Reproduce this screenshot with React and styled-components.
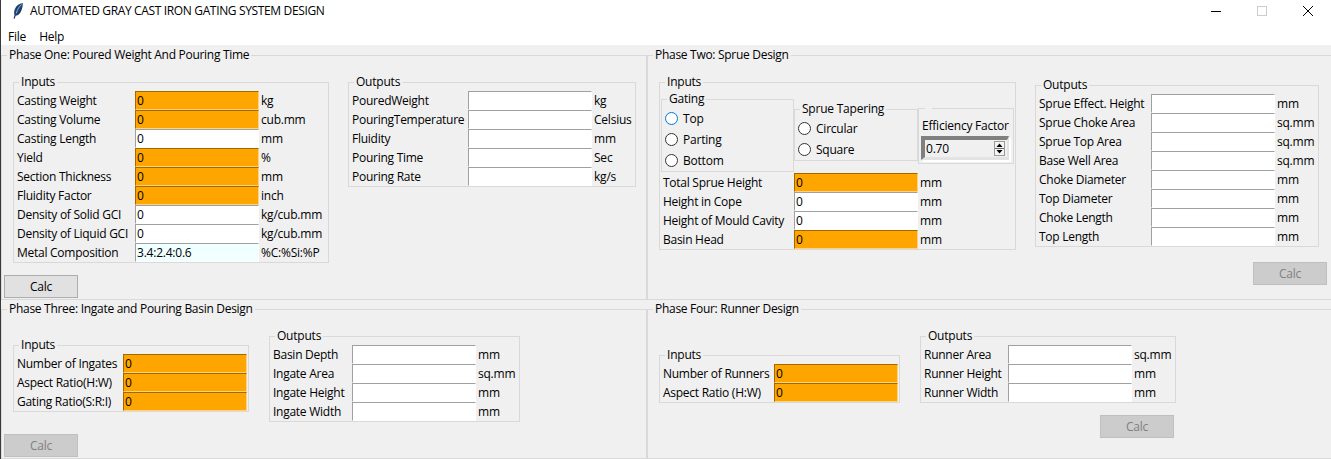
import React from 'react'
import styled, { createGlobalStyle } from 'styled-components'

const inputsOne = [
  ['Casting Weight', 'kg', 'req', '0'],
  ['Casting Volume', 'cub.mm', 'req', '0'],
  ['Casting Length', 'mm', 'opt', '0'],
  ['Yield', '%', 'req', '0'],
  ['Section Thickness', 'mm', 'req', '0'],
  ['Fluidity Factor', 'inch', 'req', '0'],
  ['Density of Solid GCI', 'kg/cub.mm', 'opt', '0'],
  ['Density of Liquid GCI', 'kg/cub.mm', 'opt', '0'],
  ['Metal Composition', '%C:%Si:%P', 'fixed', '3.4:2.4:0.6'],
]
const outputsOne = [
  ['PouredWeight', 'kg'],
  ['PouringTemperature', 'Celsius'],
  ['Fluidity', 'mm'],
  ['Pouring Time', 'Sec'],
  ['Pouring Rate', 'kg/s'],
]
const inputsTwo = [
  ['Total Sprue Height', 'mm', 'req', '0'],
  ['Height in Cope', 'mm', 'opt', '0'],
  ['Height of Mould Cavity', 'mm', 'opt', '0'],
  ['Basin Head', 'mm', 'req', '0'],
]
const outputsTwo = [
  ['Sprue Effect. Height', 'mm'],
  ['Sprue Choke Area', 'sq.mm'],
  ['Sprue Top Area', 'sq.mm'],
  ['Base Well Area', 'sq.mm'],
  ['Choke Diameter', 'mm'],
  ['Top Diameter', 'mm'],
  ['Choke Length', 'mm'],
  ['Top Length', 'mm'],
]
const inputsThree = [
  ['Number of Ingates', '', 'req', '0'],
  ['Aspect Ratio(H:W)', '', 'req', '0'],
  ['Gating Ratio(S:R:I)', '', 'req', '0'],
]
const outputsThree = [
  ['Basin Depth', 'mm'],
  ['Ingate Area', 'sq.mm'],
  ['Ingate Height', 'mm'],
  ['Ingate Width', 'mm'],
]
const inputsFour = [
  ['Number of Runners', '', 'req', '0'],
  ['Aspect Ratio (H:W)', '', 'req', '0'],
]
const outputsFour = [
  ['Runner Area', 'sq.mm'],
  ['Runner Height', 'mm'],
  ['Runner Width', 'mm'],
]

function Fields({ rows, label, unit }) {
  return (
    <Grid $label={label} $unit={unit}>
      {rows.map(([name, suffix, kind, value]) => (
        <React.Fragment key={name}>
          <FieldLabel>{name}</FieldLabel>
          <Entry $kind={kind} value={value || ''} readOnly />
          <Unit>{suffix}</Unit>
        </React.Fragment>
      ))}
    </Grid>
  )
}

function Radio({ name, text, active }) {
  return (
    <RadioRow>
      <RadioDot type='radio' name={name} $active={active} />
      {text}
    </RadioRow>
  )
}

export default function App() {
  return (
    <>
      <Global />
      <Window>
        <TitleBar>
          <Title>
            <svg width='12' height='18' viewBox='0 0 12 18'>
              <path d='M10.8 1 C7.2 1.4 4 3.8 2.8 7.2 C2 9.2 1.9 11.4 2.5 13 L1.6 16.6 L2.5 16.9 L3.7 13.8 C6.4 13.4 8.2 11.4 9.2 9 C10.4 6.4 10.8 3.6 10.8 1 Z' fill='#1f3f6b' />
              <path d='M9.6 2.6 C7.4 4.2 5.6 7 4.2 11.4' fill='none' stroke='#8fb4dc' strokeWidth='1' />
            </svg>
            <span>AUTOMATED GRAY CAST IRON GATING SYSTEM DESIGN</span>
          </Title>
          <Controls>
            <ControlBox>
              <svg width='10' height='10' viewBox='0 0 10 10'>
                <path d='M0 5.5H10' stroke='#000' />
              </svg>
            </ControlBox>
            <ControlBox>
              <svg width='10' height='10' viewBox='0 0 10 10'>
                <rect x='.5' y='.5' width='9' height='9' fill='none' stroke='#ccc' />
              </svg>
            </ControlBox>
            <ControlBox>
              <svg width='10' height='10' viewBox='0 0 10 10'>
                <path d='M0 0L10 10M10 0L0 10' stroke='#000' />
              </svg>
            </ControlBox>
          </Controls>
        </TitleBar>
        <MenuBar>
          <span>File</span>
          <span>Help</span>
        </MenuBar>
        <Main>
          <Panel $top={2}>
            <PanelTitle>Phase One: Poured Weight And Pouring Time</PanelTitle>
            <Body>
              <Groups $gap={19}>
                <Group>
                  <GroupTitle>Inputs</GroupTitle>
                  <Fields rows={inputsOne} label={121} unit={69} />
                </Group>
                <Group>
                  <GroupTitle>Outputs</GroupTitle>
                  <Fields rows={outputsOne} label={119} unit={43} />
                </Group>
              </Groups>
              <Calc $offset={2}>Calc</Calc>
            </Body>
          </Panel>
          <Panel $top={2} $open>
            <PanelTitle>Phase Two: Sprue Design</PanelTitle>
            <Body>
              <Groups $gap={19}>
                <Group>
                  <GroupTitle>Inputs</GroupTitle>
                  <Options>
                    <OptionGroup $width={133} $left={1}>
                      <GroupTitle>Gating</GroupTitle>
                      <Radio name='gating' text='Top' active />
                      <Radio name='gating' text='Parting' />
                      <Radio name='gating' text='Bottom' />
                    </OptionGroup>
                    <OptionGroup $width={124} $top={10}>
                      <GroupTitle>Sprue Tapering</GroupTitle>
                      <Radio name='taper' text='Circular' />
                      <Radio name='taper' text='Square' />
                    </OptionGroup>
                    <OptionGroup $width={96} $top={17}>
                      <BlankTitle />
                      <EffLabel>Efficiency Factor</EffLabel>
                      <Spinbox>
                        <SpinValue value='0.70' readOnly />
                        <svg width='11' height='15' viewBox='0 0 11 15'>
                          <rect x='.5' y='.5' width='10' height='14' fill='#f4f4f4' stroke='#9a9a9a' />
                          <path d='M1 7.5H10' stroke='#6a6a6a' />
                          <path d='M5.5 2.5L8.5 6H2.5ZM5.5 12.5L2.5 9H8.5Z' fill='#000' />
                        </svg>
                      </Spinbox>
                    </OptionGroup>
                  </Options>
                  <Fields rows={inputsTwo} label={134} unit={97} />
                </Group>
                <Group $top={3}>
                  <GroupTitle>Outputs</GroupTitle>
                  <Fields rows={outputsTwo} label={115} unit={43} />
                </Group>
              </Groups>
              <Calc $offset={605} disabled>Calc</Calc>
            </Body>
          </Panel>
          <Panel $top={1}>
            <PanelTitle>Phase Three: Ingate and Pouring Basin Design</PanelTitle>
            <Body>
              <Groups $gap={20}>
                <Group $top={9}>
                  <GroupTitle>Inputs</GroupTitle>
                  <Fields rows={inputsThree} label={109} unit={1} />
                </Group>
                <Group>
                  <GroupTitle>Outputs</GroupTitle>
                  <Fields rows={outputsThree} label={82} unit={43} />
                </Group>
              </Groups>
              <Calc $offset={2} disabled>Calc</Calc>
            </Body>
          </Panel>
          <Panel $top={1} $open>
            <PanelTitle>Phase Four: Runner Design</PanelTitle>
            <Body>
              <Groups $gap={20}>
                <Group $top={19}>
                  <GroupTitle>Inputs</GroupTitle>
                  <Fields rows={inputsFour} label={114} unit={1} />
                </Group>
                <Group>
                  <GroupTitle>Outputs</GroupTitle>
                  <Fields rows={outputsFour} label={87} unit={43} />
                </Group>
              </Groups>
              <Calc $offset={452} disabled>Calc</Calc>
            </Body>
          </Panel>
        </Main>
      </Window>
    </>
  )
}

const font = `"Open Sans", "Noto Sans", sans-serif`
const frameLine = '#d9d9d9'

const Global = createGlobalStyle`
  html, body {
    margin: 0;
    background: #f0f0f0;
    overflow: hidden;
  }
  * {
    box-sizing: border-box;
  }
`
const Window = styled.div`
  width: 1331px;
  height: 459px;
  border-left: 1px solid #3a3a3a;
  font-family: ${font};
  font-size: 12px;
  letter-spacing: -0.22px;
  color: #000;
  background: #f0f0f0;
`
const TitleBar = styled.div`
  height: 29px;
  display: flex;
  justify-content: space-between;
  align-items: flex-start;
  background: #fff;
`
const Title = styled.div`
  display: flex;
  align-items: flex-start;
  gap: 6px;
  padding: 2px 0 0 11px;
  line-height: 18px;
  letter-spacing: -0.35px;
`
const Controls = styled.div`
  display: flex;
`
const ControlBox = styled.div`
  width: 46px;
  height: 22px;
  display: flex;
  align-items: center;
  justify-content: center;
`
const MenuBar = styled.div`
  height: 16px;
  display: flex;
  gap: 13px;
  padding-left: 7px;
  line-height: 16px;
  background: #fff;
`
const Main = styled.div`
  display: grid;
  grid-template-columns: 646px 684px;
  grid-template-rows: 255px 159px;
`
const Panel = styled.fieldset`
  margin: ${p => p.$top}px 0 0;
  padding: 0;
  min-width: 0;
  border: 1px solid ${frameLine};
  border-right-width: ${p => (p.$open ? 0 : 1)}px;
`
const PanelTitle = styled.legend`
  margin-left: 5px;
  padding: 0 2px 2px;
  line-height: 15px;
  letter-spacing: -0.29px;
`
const Body = styled.div`
  padding-top: 10px;
`
const Groups = styled.div`
  display: flex;
  align-items: flex-start;
  gap: ${p => p.$gap}px;
  padding-left: 11px;
`
const Group = styled.fieldset`
  margin: ${p => p.$top || 0}px 0 0;
  padding: 0;
  min-width: 0;
  border: 1px solid ${frameLine};
`
const GroupTitle = styled.legend`
  margin-left: 5px;
  padding: 0 2px 2px;
  line-height: 15px;
`
const Grid = styled.div`
  display: grid;
  grid-template-columns: ${p => p.$label}px 124px ${p => p.$unit}px;
  grid-auto-rows: 19px;
  line-height: 19px;
`
const FieldLabel = styled.div`
  padding-left: 3px;
  white-space: nowrap;
  letter-spacing: -0.26px;
`
const Unit = styled.div`
  padding-left: 2px;
  white-space: nowrap;
`
const entryBg = { req: '#ffa500', fixed: '#f0ffff' }
const Entry = styled.input`
  width: 124px;
  height: 19px;
  margin: 0;
  padding: 0 0 0 1px;
  font: inherit;
  letter-spacing: inherit;
  color: #000;
  outline: none;
  background: ${p => entryBg[p.$kind] || '#fff'};
  border-style: solid;
  border-width: 1px;
  border-color: ${p => (p.$kind === 'req'
    ? '#a06a00 #ffd27f #ffd27f #a06a00'
    : '#a0a0a0 #fff #fff #a0a0a0')};
`
const Calc = styled.button`
  display: block;
  width: 74px;
  height: 23px;
  margin: 12px 0 0 ${p => p.$offset}px;
  padding: 0;
  font: inherit;
  letter-spacing: inherit;
  color: #000;
  background: #e1e1e1;
  border: 1px solid #adadad;
  &:disabled {
    color: #808080;
    background: #ccc;
    border-color: #bfbfbf;
  }
`
const Options = styled.div`
  display: flex;
  align-items: flex-start;
  margin-bottom: 1px;
`
const OptionGroup = styled.fieldset`
  width: ${p => p.$width}px;
  margin: ${p => p.$top || 0}px 0 0 ${p => p.$left || 0}px;
  padding: 0;
  min-width: 0;
  border: 1px solid ${frameLine};
`
const BlankTitle = styled.legend`
  width: 7px;
  height: 0;
  margin-left: 6px;
  padding: 0;
`
const RadioRow = styled.label`
  height: 21px;
  display: flex;
  align-items: center;
  gap: 5px;
  padding-left: 3px;
`
const RadioDot = styled.input`
  appearance: none;
  width: 13px;
  height: 13px;
  margin: 0;
  border-radius: 50%;
  background: #fff;
  border: 1px solid ${p => (p.$active ? '#0078d7' : '#333')};
`
const EffLabel = styled.div`
  padding: 9px 0 0 3px;
  line-height: 16px;
  white-space: nowrap;
`
const Spinbox = styled.div`
  width: 88px;
  height: 24px;
  margin: 2px 0 3px 2px;
  display: flex;
  align-items: center;
  justify-content: space-between;
  padding-right: 2px;
  background: #f0f0f0;
  border-style: solid;
  border-width: 4px 2px 3px 4px;
  border-color: #808080 #e3e3e3 #e3e3e3 #808080;
  box-shadow: 2px 2px 0 #fff;
`
const SpinValue = styled.input`
  width: 60px;
  padding: 0 0 0 1px;
  border: 0;
  outline: none;
  font: inherit;
  letter-spacing: inherit;
  color: #000;
  background: transparent;
`
